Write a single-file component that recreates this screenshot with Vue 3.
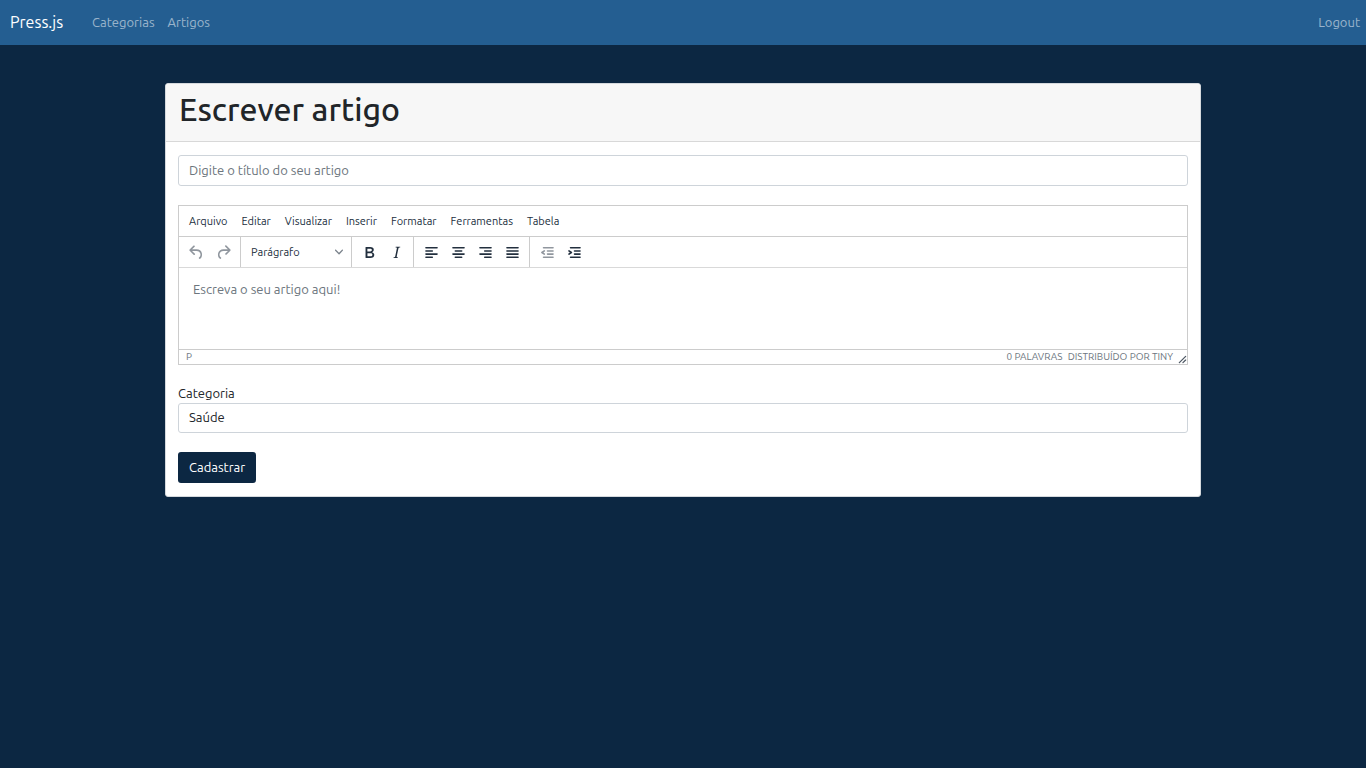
<script setup>
import { ref } from 'vue'

const title = ref('')
const body = ref('')
const category = ref('Saúde')
const menus = ['Arquivo', 'Editar', 'Visualizar', 'Inserir', 'Formatar', 'Ferramentas', 'Tabela']

const history = [
  { label: 'Desfazer', d: 'M6.4 8H12c3.7 0 6.2 2 6.8 5.1.6 2.7-.4 5.6-2.3 6.8a1 1 0 0 1-1-1.8c1.1-.6 1.8-2.7 1.4-4.6-.5-2.1-2.1-3.5-4.9-3.5H6.4l3.3 3.3a1 1 0 1 1-1.4 1.4l-5-5a1 1 0 0 1 0-1.4l5-5a1 1 0 0 1 1.4 1.4L6.4 8z', off: true },
  { label: 'Refazer', d: 'M17.6 10H12c-2.8 0-4.4 1.4-4.9 3.5-.4 2 .3 4 1.4 4.6a1 1 0 1 1-1 1.8c-2-1.2-2.9-4.1-2.3-6.8.6-3 3-5.1 6.8-5.1h5.6l-3.3-3.3a1 1 0 1 1 1.4-1.4l5 5a1 1 0 0 1 0 1.4l-5 5a1 1 0 0 1-1.4-1.4l3.3-3.3z', off: true },
]
const groups = [
  [
    { label: 'Negrito', d: 'M7.8 19c-.3 0-.5 0-.6-.2l-.2-.5V5.7c0-.2 0-.4.2-.5l.6-.2h5c1.5 0 2.7.3 3.5 1 .7.6 1.1 1.4 1.1 2.5a3 3 0 0 1-.6 1.9c-.4.6-1 1-1.6 1.2.4.1.9.3 1.3.6s.8.7 1 1.2c.4.4.5 1 .5 1.6 0 1.3-.4 2.3-1.3 3-.8.7-2.1 1-3.8 1H7.8zm5-8.3c.6 0 1.2-.1 1.6-.5.4-.3.6-.7.6-1.3 0-1.1-.8-1.7-2.3-1.7H9.3v3.5h3.4zm.5 6c.7 0 1.3-.1 1.7-.4.4-.4.6-.9.6-1.5s-.2-1-.7-1.4c-.4-.3-1-.4-2-.4H9.4v3.8h4z' },
    { label: 'Itálico', d: 'm16.7 4.7-.1.9h-.3c-.6 0-1 0-1.4.3-.3.3-.4.6-.5 1.1l-2.1 9.8v.6c0 .5.4.8 1.4.8h.2l-.2.8H8l.2-.8h.2c1.1 0 1.8-.5 2-1.5l2-9.8.1-.5c0-.6-.4-.8-1.4-.8h-.3l.2-.9h5.8z' },
  ],
  [
    { label: 'Alinhar à esquerda', d: 'M5 5h14a1 1 0 0 1 0 2H5a1 1 0 1 1 0-2zm0 4h8a1 1 0 0 1 0 2H5a1 1 0 1 1 0-2zm0 8h8a1 1 0 0 1 0 2H5a1 1 0 0 1 0-2zm0-4h14a1 1 0 0 1 0 2H5a1 1 0 0 1 0-2z' },
    { label: 'Centralizar', d: 'M5 5h14a1 1 0 0 1 0 2H5a1 1 0 1 1 0-2zm3 4h8a1 1 0 0 1 0 2H8a1 1 0 1 1 0-2zm0 8h8a1 1 0 0 1 0 2H8a1 1 0 0 1 0-2zm-3-4h14a1 1 0 0 1 0 2H5a1 1 0 0 1 0-2z' },
    { label: 'Alinhar à direita', d: 'M5 5h14a1 1 0 0 1 0 2H5a1 1 0 1 1 0-2zm6 4h8a1 1 0 0 1 0 2h-8a1 1 0 0 1 0-2zm0 8h8a1 1 0 0 1 0 2h-8a1 1 0 0 1 0-2zm-6-4h14a1 1 0 0 1 0 2H5a1 1 0 0 1 0-2z' },
    { label: 'Justificar', d: 'M5 5h14a1 1 0 0 1 0 2H5a1 1 0 1 1 0-2zm0 4h14a1 1 0 0 1 0 2H5a1 1 0 1 1 0-2zm0 4h14a1 1 0 0 1 0 2H5a1 1 0 0 1 0-2zm0 4h14a1 1 0 0 1 0 2H5a1 1 0 0 1 0-2z' },
  ],
  [
    { label: 'Diminuir recuo', d: 'M7 5h12a1 1 0 0 1 0 2H7a1 1 0 1 1 0-2zm5 4h7a1 1 0 0 1 0 2h-7a1 1 0 0 1 0-2zm0 4h7a1 1 0 0 1 0 2h-7a1 1 0 0 1 0-2zm-5 4h12a1 1 0 0 1 0 2H7a1 1 0 0 1 0-2zm1.6-3.8a1 1 0 0 1-1.2 1.6l-3-2a1 1 0 0 1 0-1.6l3-2a1 1 0 0 1 1.2 1.6L6.8 12l1.8 1.2z', off: true },
    { label: 'Aumentar recuo', d: 'M7 5h12a1 1 0 0 1 0 2H7a1 1 0 1 1 0-2zm5 4h7a1 1 0 0 1 0 2h-7a1 1 0 0 1 0-2zm0 4h7a1 1 0 0 1 0 2h-7a1 1 0 0 1 0-2zm-5 4h12a1 1 0 0 1 0 2H7a1 1 0 0 1 0-2zm-2.6-3.8L6.2 12l-1.8-1.2a1 1 0 0 1 1.2-1.6l3 2a1 1 0 0 1 0 1.6l-3 2a1 1 0 1 1-1.2-1.6z' },
  ],
]
</script>

<template>
  <nav class="navbar">
    <a class="brand" href="#">Press.js</a>
    <a class="nav-link" href="#">Categorias</a>
    <a class="nav-link" href="#">Artigos</a>
    <a class="nav-link logout" href="#">Logout</a>
  </nav>

  <main class="card">
    <header class="card-header">
      <h1>Escrever artigo</h1>
    </header>
    <form class="card-body" @submit.prevent>
      <input v-model="title" class="control" type="text" aria-label="Título" placeholder="Digite o título do seu artigo">

      <section class="editor">
        <div class="menubar">
          <button v-for="m in menus" :key="m" type="button">{{ m }}</button>
        </div>
        <div class="toolbar">
          <div class="group">
            <button v-for="t in history" :key="t.label" class="tool" type="button" :aria-label="t.label" :disabled="t.off">
              <svg viewBox="0 0 24 24"><path :d="t.d" /></svg>
            </button>
          </div>
          <div class="group">
            <button class="format" type="button">
              <span>Parágrafo</span>
              <svg viewBox="0 0 10 10"><path d="M8.7 2.2c.3-.3.8-.3 1 0 .4.4.4.9 0 1.2L5.7 7.8c-.3.3-.9.3-1.2 0L.2 3.4a.8.8 0 0 1 0-1.2c.3-.3.8-.3 1.1 0L5 6l3.7-3.8z" /></svg>
            </button>
          </div>
          <div v-for="(g, i) in groups" :key="i" class="group">
            <button v-for="t in g" :key="t.label" class="tool" type="button" :aria-label="t.label" :disabled="t.off">
              <svg viewBox="0 0 24 24"><path :d="t.d" /></svg>
            </button>
          </div>
        </div>
        <textarea v-model="body" class="content" aria-label="Artigo" placeholder="Escreva o seu artigo aqui!"></textarea>
        <div class="statusbar">
          <span class="path">P</span>
          <span>0 PALAVRAS</span>
          <a href="#">DISTRIBUÍDO POR TINY</a>
          <svg class="grip" viewBox="0 0 10 10"><path d="M8.1 1.1A.5.5 0 1 1 9 2l-7 7A.5.5 0 1 1 1 8l7-7zM8.1 5.1A.5.5 0 1 1 9 6l-3 3A.5.5 0 1 1 5 8l3-3z" /></svg>
        </div>
      </section>

      <label for="category">Categoria</label>
      <select id="category" v-model="category" class="control">
        <option>Saúde</option>
      </select>

      <button class="submit" type="submit">Cadastrar</button>
    </form>
  </main>
</template>

<style>
body {
  background: #0c2742;
  font-family: Ubuntu, "Noto Sans", sans-serif;
  font-size: 13px;
  color: #212529;
}
</style>

<style scoped>
* {
  box-sizing: border-box;
}
button,
input,
select,
textarea {
  margin: 0;
  font: inherit;
  color: inherit;
}
a {
  color: inherit;
  text-decoration: none;
}
.navbar {
  display: flex;
  align-items: center;
  gap: 13px;
  height: 45px;
  padding: 0 6px 2px 10px;
  background: #245e91;
}
.brand {
  margin-right: 16px;
  font-size: 16px;
  color: #fff;
}
.nav-link {
  color: rgba(255, 255, 255, 0.55);
}
.logout {
  margin-left: auto;
}
.card {
  width: calc(100% - 32px);
  max-width: 1036px;
  margin: 38px auto;
  border: 1px solid #d5d9dd;
  border-radius: 3px;
  background: #fff;
  overflow: hidden;
}
.card-header {
  padding: 6px 13px 13px;
  border-bottom: 1px solid #d8d8d8;
  background: #f7f7f7;
}
h1 {
  margin: 0;
  font-family: "Ubuntu Medium", Ubuntu, "Noto Sans", sans-serif;
  font-size: 32px;
  font-weight: 500;
  line-height: 38px;
}
.card-body {
  display: flex;
  flex-direction: column;
  align-items: stretch;
  padding: 13px 12px;
}
.control {
  width: 100%;
  height: 31px;
  padding: 0 10px 2px;
  border: 1px solid #ced4da;
  border-radius: 3px;
  background: #fff;
  appearance: none;
  outline: none;
}
select.control {
  height: 30px;
}
::placeholder {
  color: #6c757d;
  opacity: 1;
}
.editor {
  margin: 19px 0;
  border: 1px solid #ccc;
  color: #222f3e;
}
.menubar {
  display: flex;
  gap: 14px;
  height: 31px;
  padding: 0 10px;
  border-bottom: 1px solid #ccc;
  font-size: 11px;
}
.menubar button,
.tool,
.format {
  padding: 0;
  border: 0;
  background: none;
}
.toolbar {
  display: flex;
  height: 31px;
  border-bottom: 1px solid #d9d9d9;
}
.group {
  display: flex;
  align-items: center;
  padding: 0 3px 0 4px;
  border-right: 1px solid #ccc;
}
.group:last-child {
  border-right: 0;
}
.tool {
  display: flex;
  align-items: center;
  justify-content: center;
  width: 27px;
  height: 27px;
}
.tool svg {
  width: 19px;
  height: 19px;
}
.tool:disabled svg {
  opacity: 0.5;
}
svg {
  display: block;
  fill: #222f3e;
}
.format {
  display: flex;
  align-items: center;
  justify-content: space-between;
  width: 103px;
  height: 27px;
  padding: 0 5px 0 6px;
  font-size: 11px;
}
.format svg {
  width: 8px;
  height: 8px;
  opacity: 0.6;
}
.content {
  display: block;
  width: 100%;
  height: 81px;
  padding: 12px 14px;
  border: 0;
  outline: none;
  resize: none;
  line-height: 18px;
}
.statusbar {
  display: flex;
  align-items: center;
  gap: 5px;
  height: 15px;
  padding-left: 7px;
  border-top: 1px solid #ccc;
  font-size: 10px;
  line-height: 14px;
  color: #6d7680;
}
.path {
  margin-right: auto;
}
.grip {
  align-self: flex-end;
  width: 9px;
  height: 9px;
  opacity: 0.8;
}
label {
  line-height: 19px;
}
.submit {
  align-self: flex-start;
  height: 31px;
  margin-top: 19px;
  padding: 0 11px 2px;
  border: 0;
  border-radius: 3px;
  background: #0c2742;
  color: #fff;
}
</style>
